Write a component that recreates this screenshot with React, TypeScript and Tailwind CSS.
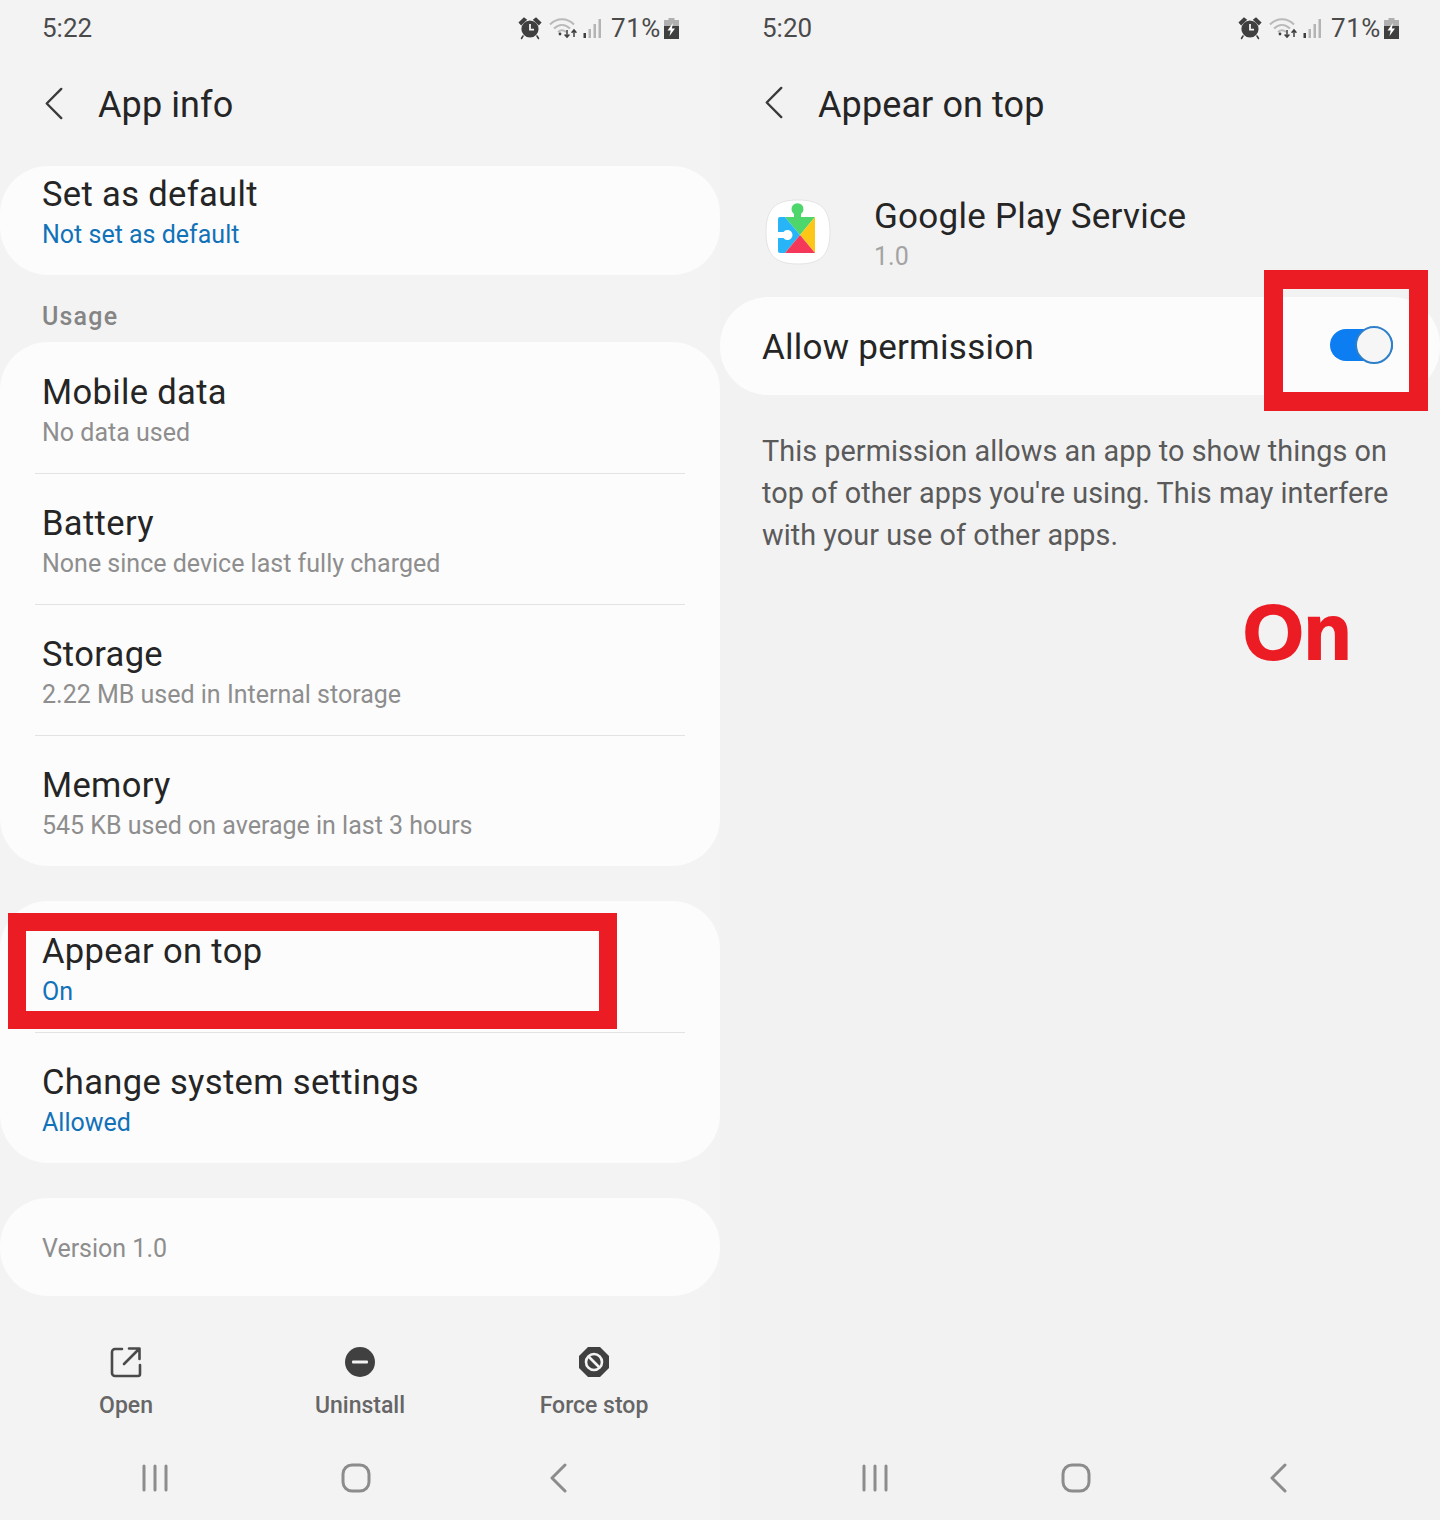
import React from 'react';

const Chevron = ({ className }: { className: string }) => (
  <svg className={className} viewBox="0 0 22 36" fill="none" stroke="currentColor" strokeWidth="2.6" strokeLinecap="round" strokeLinejoin="round">
    <path d="M19 2 3 18l16 16" />
  </svg>
);

const StatusIcons = ({ level }: { level: string }) => (
  <div className="flex items-center h-14 text-[#414141]">
    {/* alarm */}
    <svg className="w-[24px] h-[24px] mr-[7px]" viewBox="0 0 24 24">
      <circle cx="12" cy="13" r="8.6" fill="#3f3f3f" />
      <path d="M1.5 6.5 6 2.2l2 1.6-4.8 4.6zM22.5 6.5 18 2.2l-2 1.6 4.8 4.6zM5 20l-1.5 2.5M19 20l1.5 2.5" fill="#3f3f3f" stroke="#3f3f3f" strokeWidth="1.6" strokeLinecap="round" />
      <path d="M12 8v5.6h4" fill="none" stroke="#f3f3f3" strokeWidth="1.8" />
    </svg>
    {/* wifi with data arrows */}
    <svg className="w-[29px] h-[24px] mr-[5px]" viewBox="0 0 29 24" fill="none">
      <path d="M1 8.5C8 1.5 18 1.5 25 8.5M5 12.5c5-4.8 11-4.8 16 0M9 16c3-2.5 5-2.5 8 0" stroke="#b9b9b9" strokeWidth="2" />
      <circle cx="11" cy="18" r="1.4" fill="#3f3f3f" />
      <path d="M18 14v7m-2.400-2.600 2.400 2.800 2.400-2.800M25 21v-7m-2.400 2.800 2.400-2.800 2.400 2.800" stroke="#3f3f3f" strokeWidth="1.500" />
    </svg>
    {/* signal */}
    <svg className="w-[19px] h-[20px] mr-[9px]" viewBox="0 0 19 20">
      <rect x="0.500" y="15" width="2.500" height="5" fill="#3f3f3f" />
      <rect x="5.500" y="11" width="2.500" height="9" fill="#b4b4b4" />
      <rect x="10.500" y="6" width="2.500" height="14" fill="#b4b4b4" />
      <rect x="15.500" y="1" width="2.500" height="19" fill="#b4b4b4" />
    </svg>
    <span className="text-[26px] tracking-[0.6px] text-[#4a4a4a] mr-[3px]">{level}</span>
    {/* battery */}
    <svg className="w-[15px] h-[21px]" viewBox="0 0 15 21">
      <path d="M4.500 0h6v2H15v7H0V2h4.500z" fill="#b0b0b0" />
      <rect y="8" width="15" height="13" fill="#3f3f3f" />
      <path d="M9 5 3.500 12.500h3.200L5.500 18 11 10.500H7.800z" fill="#fff" />
    </svg>
  </div>
);

const Row = ({ title, sub, blue, divider, top = 'pt-[30px]', height = 'h-[131px]' }: { title: string; sub: string; blue?: boolean; divider?: boolean; top?: string; height?: string }) => (
  <div className={`relative px-[42px] ${top} ${height}`}>
    <div className="text-[34.500px] leading-[40px] text-[#252525] tracking-[0.35px]">{title}</div>
    <div className={`text-[25px] leading-[40px] pt-px ${blue ? 'text-[#1272b8]' : 'text-[#8e8e8e]'}`}>{sub}</div>
    {divider && <div className="absolute -bottom-px left-[35px] right-[35px] h-px bg-[#e3e3e3]" />}
  </div>
);

const Card = ({ children, className = '' }: { children: React.ReactNode; className?: string }) => (
  <div className={`bg-[#fcfcfc] rounded-[48px] ${className}`}>{children}</div>
);

const NavBar = () => (
  <div className="flex items-center h-[84px] text-[#8c8c8c]">
    <svg className="w-[30px] h-[30px] ml-[140px]" viewBox="0 0 30 30" fill="none" stroke="currentColor" strokeWidth="3" strokeLinecap="round">
      <path d="M4 3v24M15 3v24M26 3v24" />
    </svg>
    <svg className="w-[30px] h-[30px] ml-[171px]" viewBox="0 0 30 30" fill="none" stroke="currentColor" strokeWidth="3">
      <rect x="2" y="2" width="26" height="26" rx="9" />
    </svg>
    <svg className="w-[18px] h-[30px] ml-[178px]" viewBox="0 0 18 30" fill="none" stroke="currentColor" strokeWidth="3" strokeLinecap="round" strokeLinejoin="round">
      <path d="M16 2 3 15l13 13" />
    </svg>
  </div>
);

const ActionButton = ({ label, children }: { label: string; children: React.ReactNode }) => (
  <div className="flex flex-col items-center">
    <div className="h-[34px] flex items-center">{children}</div>
    <div className="mt-[10px] text-[23px] leading-[34px] font-medium text-[#666666]">{label}</div>
  </div>
);

const PlayLogo = () => (
  <svg className="w-[66px] h-[66px] mr-[44px]" viewBox="0 0 66 66">
    <path d="M33 1C56 1 65 10 65 33S56 65 33 65 1 56 1 33 10 1 33 1z" fill="#ffffff" stroke="#e4e4e4" strokeWidth="1" />
    <path d="M20 18h9v-3a6 6 0 1 1 7 0v3h14L35 36z" fill="#4cd66c" />
    <path d="M15 18h5l15 18-15 18h-5a2 2 0 0 1-2-2V20a2 2 0 0 1 2-2z" fill="#27b5f7" />
    <path d="M50 18v36L35 36z" fill="#fcc716" />
    <path d="M20 54h30L35 36z" fill="#f5385a" />
    <path d="M12 33h6.500a5 5 0 1 1 0 6H12z" fill="#ffffff" />
  </svg>
);

export default function App() {
  return (
    <div className="relative w-[1440px] h-[1520px] overflow-hidden flex font-['Roboto',sans-serif]">
      {/* left phone */}
      <div className="w-[720px] h-full bg-[#f3f3f3] flex flex-col">
        <div className="flex justify-between pl-[42px] pr-[41px]">
          <span className="text-[26px] leading-[56px] text-[#4a4a4a]">5:22</span>
          <StatusIcons level="71%" />
        </div>
        <div className="h-[110px] flex items-start pl-[44px] pt-[30px]">
          <Chevron className="w-[20px] h-[35px] text-[#3a3a3a]" />
          <span className="ml-[34px] text-[36px] leading-[38px] tracking-[0.1px] text-[#252525]">App info</span>
        </div>
        <Card>
          <Row title="Set as default" sub="Not set as default" blue top="pt-[8px]" height="h-[109px]" />
        </Card>
        <div className="h-[67px] pl-[42px] pt-[27px] text-[25px] leading-[30px] font-medium tracking-[1.2px] text-[#858585]">Usage</div>
        <Card>
          <Row title="Mobile data" sub="No data used" divider />
          <Row title="Battery" sub="None since device last fully charged" divider />
          <Row title="Storage" sub="2.22 MB used in Internal storage" divider />
          <Row title="Memory" sub="545 KB used on average in last 3 hours" />
        </Card>
        <Card className="mt-[35px]">
          <Row title="Appear on top" sub="On" blue divider />
          <Row title="Change system settings" sub="Allowed" blue />
        </Card>
        <Card className="mt-[35px] h-[98px] flex items-center pl-[42px]">
          <span className="text-[25px] leading-[40px] pt-[4px] text-[#8e8e8e]">Version 1.0</span>
        </Card>
        <div className="grid grid-cols-3 px-[9px] mt-[49px]">
          <ActionButton label="Open">
            <svg className="w-[32px] h-[32px]" viewBox="0 0 32 32" fill="none" stroke="#4a4a4a" strokeWidth="2.600" strokeLinecap="round" strokeLinejoin="round">
              <path d="M12 3H5a3 3 0 0 0-3 3v21a3 3 0 0 0 3 3h23a2 2 0 0 0 2-2v-9M14 18 29 3M19 2.500h10.500V13" />
            </svg>
          </ActionButton>
          <ActionButton label="Uninstall">
            <svg className="w-[30px] h-[30px]" viewBox="0 0 30 30">
              <circle cx="15" cy="15" r="15" fill="#404040" />
              <rect x="7" y="13.500" width="16" height="3" rx="1" fill="#f3f3f3" />
            </svg>
          </ActionButton>
          <ActionButton label="Force stop">
            <svg className="w-[30px] h-[30px]" viewBox="0 0 30 30">
              <path d="M9 0h12l9 9v12l-9 9H9l-9-9V9z" fill="#404040" />
              <circle cx="15" cy="15" r="8" fill="none" stroke="#f3f3f3" strokeWidth="2.600" />
              <path d="m9.500 9.500 11 11" stroke="#f3f3f3" strokeWidth="2.600" />
            </svg>
          </ActionButton>
        </div>
        <div className="mt-[13px]">
          <NavBar />
        </div>
      </div>

      {/* right phone */}
      <div className="w-[720px] h-full bg-[#f2f2f2] flex flex-col">
        <div className="flex justify-between pl-[42px] pr-[41px]">
          <span className="text-[26px] leading-[56px] text-[#4a4a4a]">5:20</span>
          <StatusIcons level="71%" />
        </div>
        <div className="h-[110px] flex items-start pl-[44px] pt-[30px]">
          <Chevron className="w-[20px] h-[35px] text-[#3a3a3a] -mt-[1px]" />
          <span className="ml-[34px] text-[36px] leading-[38px] tracking-[0.1px] text-[#252525]">Appear on top</span>
        </div>
        <div className="h-[131px] flex items-start pl-[45px] pt-[33px]">
          <PlayLogo />
          <div className="-ml-px">
            <div className="text-[35px] leading-[40px] tracking-[0.25px] text-[#252525] -mt-[2px]">Google Play Service</div>
            <div className="text-[25px] leading-[40px] text-[#a3a3a3]">1.0</div>
          </div>
        </div>
        <Card className="h-[98px] flex items-center justify-between pl-[42px] pr-[47px]">
          <span className="text-[35px] tracking-[0.25px] text-[#252525] pt-[4px]">Allow permission</span>
          <div className="relative w-[63px] h-[32px] rounded-full bg-[#0d7df2] -mt-[2px]">
            <div className="absolute right-0 top-[-3px] w-[38px] h-[38px] rounded-full bg-[#f6f6f6] border-2 border-[#2f7fc9]" />
          </div>
        </Card>
        <div className="pl-[42px] pr-[30px] pt-[35px] text-[28.800px] leading-[42px] tracking-[0.05px] text-[#5a5a5a]">
          This permission allows an app to show things on top of other apps you're using. This may interfere with your use of other apps.
        </div>
        <div className="pl-[523px] mt-[31px] text-[78px] leading-[90px] font-bold text-[#ec1c24] font-['Liberation_Sans',sans-serif] [-webkit-text-stroke:2px_#ec1c24]">On</div>
        <div className="mt-auto">
          <NavBar />
        </div>
      </div>

      {/* red annotation boxes */}
      <div className="absolute left-[8px] top-[913px] w-[609px] h-[116px] border-[18px] border-[#ec1c24]" />
      <div className="absolute left-[1264px] top-[270px] w-[164px] h-[141px] border-[19px] border-[#ec1c24]" />
    </div>
  );
}
